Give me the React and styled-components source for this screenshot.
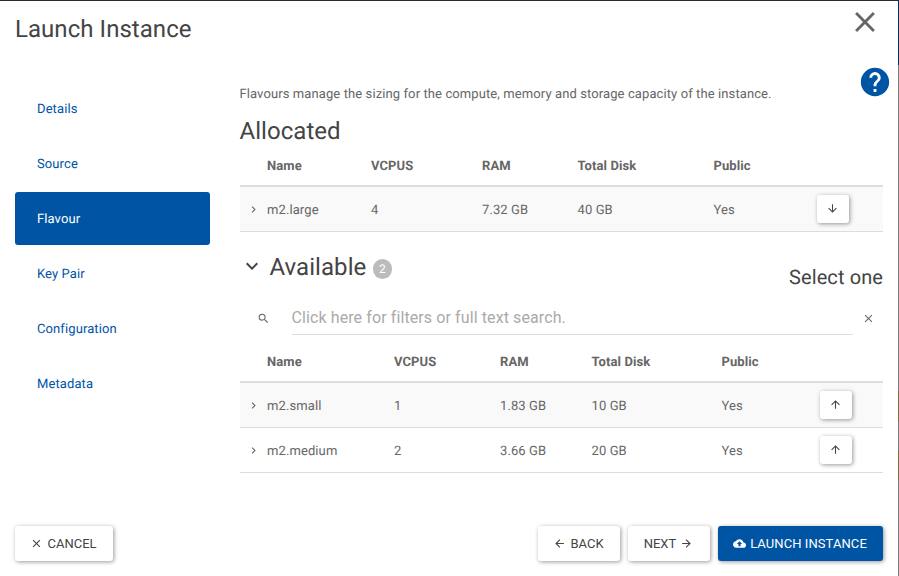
import React from "react";
import styled, { createGlobalStyle } from "styled-components";

const GlobalStyle = createGlobalStyle`
  *, *::before, *::after { box-sizing: border-box; }
  body {
    margin: 0;
    background: #fff;
    color: #666;
    font: 13px/20px Roboto, sans-serif;
    letter-spacing: 0.1px;
    overflow: hidden;
    -webkit-font-smoothing: antialiased;
    text-rendering: geometricPrecision;
  }
  h1, h2, h3, p { margin: 0; font-weight: 400; }
  button { font: inherit; letter-spacing: inherit; cursor: pointer; }
`;

const PATHS = {
  close:
    "M19,6.41L17.59,5L12,10.59L6.41,5L5,6.41L10.59,12L5,17.59L6.41,19L12,13.41L17.59,19L19,17.59L13.41,12L19,6.41Z",
  help:
    "M15.07,11.25L14.17,12.17C13.45,12.89 13,13.5 13,15H11V14.5C11,13.39 11.45,12.39 12.17,11.67L13.41,10.41C13.78,10.05 14,9.55 14,9C14,7.89 13.1,7 12,7A2,2 0 0,0 10,9H8A4,4 0 0,1 12,5A4,4 0 0,1 16,9C16,9.88 15.64,10.67 15.07,11.25M13,19H11V17H13M12,2A10,10 0 0,0 2,12A10,10 0 0,0 12,22A10,10 0 0,0 22,12C22,6.47 17.5,2 12,2Z",
  right: "M8.59,16.58L13.17,12L8.59,7.41L10,6L16,12L10,18L8.59,16.58Z",
  down: "M7.41,8.58L12,13.17L16.59,8.58L18,10L12,16L6,10L7.41,8.58Z",
  search:
    "M9.5,3A6.5,6.5 0 0,1 16,9.5C16,11.11 15.41,12.59 14.44,13.73L14.71,14H15.5L20.5,19L19,20.5L14,15.5V14.71L13.73,14.44C12.59,15.41 11.11,16 9.5,16A6.5,6.5 0 0,1 3,9.5A6.5,6.5 0 0,1 9.5,3M9.5,5C7,5 5,7 5,9.5C5,12 7,14 9.5,14C12,14 14,12 14,9.5C14,7 12,5 9.5,5Z",
  arrowDown:
    "M11,4H13V16L18.5,10.5L19.92,11.92L12,19.84L4.08,11.92L5.5,10.5L11,16V4Z",
  arrowUp:
    "M13,20H11V8L5.5,13.5L4.08,12.08L12,4.16L19.92,12.08L18.5,13.5L13,8V20Z",
  arrowLeft:
    "M20,11V13H8L13.5,18.5L12.08,19.92L4.16,12L12.08,4.08L13.5,5.5L8,11H20Z",
  arrowRight:
    "M4,11V13H16L10.5,18.5L11.92,19.92L19.84,12L11.92,4.08L10.5,5.5L16,11H4Z",
  upload:
    "M19.35 10.04C18.67 6.59 15.64 4 12 4 9.11 4 6.6 5.64 5.35 8.04 2.34 8.36 0 10.91 0 14c0 3.31 2.69 6 6 6h13c2.76 0 5-2.24 5-5 0-2.64-2.05-4.78-4.65-4.96zM14 13v4h-4v-4H7l5-5 5 5h-3z",
};

const Svg = styled.svg`
  display: block;
  flex: none;
  width: ${(p) => p.$size}px;
  height: ${(p) => p.$size}px;
  fill: currentColor;
`;
const Icon = ({ name, size = 13 }) => (
  <Svg viewBox="0 0 24 24" $size={size} aria-hidden="true">
    <path d={PATHS[name]} />
  </Svg>
);

const Screen = styled.div`
  display: grid;
  grid-template-columns: 898px 1px;
  width: 899px;
  height: 576px;
`;
const Backdrop = styled.div`
  background: linear-gradient(#002c57 65px, #7b7b7b 65px 391px, #7d6848 391px 422px, #7b7b7b 422px 450px, #7d6848 450px 480px, #7b7b7b 480px);
`;
const Modal = styled.main`
  display: grid;
  grid-template-columns: 195px 1fr;
  grid-template-rows: 66px 1fr 50px;
  column-gap: 30px;
  padding: 0 15px 0 15px;
  border-top: 1px solid #2b2a2c;
`;
const Header = styled.header`
  grid-column: 1 / -1;
  display: flex;
  justify-content: space-between;
  padding-top: 4px;
`;
const Title = styled.h1`
  color: #444;
  font-size: 24px;
  line-height: 28px;
  letter-spacing: 0.05px;
`;
const HeaderTitle = styled(Title)`
  padding-top: 10px;
`;
const AllocatedTitle = styled(Title)`
  margin-left: -0.5px;
`;
const PlainButton = styled.button`
  display: flex;
  align-items: center;
  justify-content: center;
  align-self: flex-start;
  padding: 0;
  border: 0;
  background: none;
  color: ${(p) => p.$color ?? "#666"};
`;
const CloseButton = styled(PlainButton)`
  margin-right: 1px;
`;
const Nav = styled.nav`
  display: flex;
  flex-direction: column;
  gap: 2px;
  padding-top: 15px;
`;
const Step = styled.a`
  display: flex;
  align-items: center;
  height: 53px;
  padding: 2px 22px 0;
  border-radius: 3px;
  color: ${(p) => (p.$active ? "#fff" : "#0054a6")};
  background: ${(p) => (p.$active ? "#0054a4" : "transparent")};
`;
const Content = styled.section`
  display: flex;
  flex-direction: column;
  min-width: 0;
`;
const Intro = styled.div`
  display: flex;
  justify-content: space-between;
  height: 52px;
  margin-top: -2px;
  margin-right: -9px;
`;
const IntroText = styled.p`
  margin-left: -0.5px;
  padding-top: 20px;
`;
const SectionHead = styled.div`
  display: flex;
  align-items: center;
  height: 28px;
`;
const Available = styled(SectionHead)`
  height: 50px;
  margin-top: 16px;
  align-items: flex-start;
`;
const Toggle = styled(PlainButton)`
  width: 24px;
  height: 28px;
  margin-top: 4px;
  margin-right: 6px;
  margin-left: -0.5px;
  color: #444;
`;
const AvailableTitle = styled(Title)`
  margin-top: 5px;
`;
const Badge = styled.span`
  width: 19px;
  height: 20px;
  margin: 11px 0 0 6.5px;
  border-radius: 10px;
  background: #bbb;
  color: #fff;
  font-size: 12px;
  line-height: 20px;
  letter-spacing: 0;
  text-align: center;
`;
const Hint = styled.h3`
  margin: 15px 0 0 auto;
  color: #444;
  font-size: 20px;
  line-height: 28px;
  letter-spacing: 0.1px;
`;
const Search = styled.div`
  display: grid;
  grid-template-columns: 52px 561px 30px;
  height: 37px;
  margin-top: 1px;
`;
const SearchIcon = styled.span`
  display: flex;
  justify-content: center;
  padding: 13px 6px 0 0;
`;
const SearchInput = styled.input`
  width: 100%;
  height: 36px;
  padding: 2px 0 0;
  border: 0;
  border-bottom: 1px solid #ddd;
  outline: 0;
  background: none;
  color: #444;
  font: 16px/24px Roboto, sans-serif;
  letter-spacing: 0.1px;
  text-indent: -0.5px;
  &::placeholder { color: #aaa; opacity: 1; }
`;
const Clear = styled(PlainButton)`
  padding: 13px 0 0 1px;
`;
const Table = styled.div`
  display: flex;
  flex-direction: column;
  flex: none;
`;
const Row = styled.div`
  display: grid;
  grid-template-columns: 27px ${(p) => p.$cols} 1fr;
  align-items: center;
  height: 45px;
  border-bottom: 1px solid #ddd;
  background: ${(p) => (p.$shaded ? "#f9f9f9" : "#fff")};
`;
const HeadRow = styled(Row)`
  height: ${(p) => p.$height}px;
  padding-bottom: ${(p) => p.$pad}px;
  align-items: end;
  border-bottom-width: 2px;
  font-weight: 700;
`;
const Cell = styled.span`
  padding-top: 3px;
`;
const Expander = styled(PlainButton)`
  align-self: center;
  width: 27px;
`;
const MoveButton = styled.button`
  display: flex;
  align-items: center;
  justify-content: center;
  width: 32px;
  height: 28px;
  padding: 0 1px 1px 0;
  border: 0;
  border-radius: 3px;
  background: #fff;
  color: #444;
  box-shadow: 1px 1px 4px rgba(0, 0, 0, 0.4);
`;
const Footer = styled.footer`
  grid-column: 1 / -1;
  display: flex;
  gap: 8px;
  height: 35px;
`;
const Button = styled.button`
  display: flex;
  align-items: center;
  justify-content: center;
  gap: 4px;
  width: ${(p) => p.$width}px;
  height: 35px;
  padding: 0 1px 0 0;
  border: 0;
  border-radius: 3px;
  background: ${(p) => (p.$primary ? "#0054a4" : "#fff")};
  color: ${(p) => (p.$primary ? "#fff" : "#444")};
  letter-spacing: ${(p) => (p.$primary ? 0.08 : 0)}px;
  box-shadow: 1px 1px 4px rgba(0, 0, 0, 0.4);
`;
const Actions = styled.div`
  display: flex;
  gap: 8px;
  margin-left: auto;
`;

const STEPS = ["Details", "Source", "Flavour", "Key Pair", "Configuration", "Metadata"];
const HEADS = ["Name", "VCPUS", "RAM", "Total Disk", "Public"];
const ALLOCATED = [["m2.large", "4", "7.32 GB", "40 GB", "Yes"]];
const AVAILABLE = [
  ["m2.small", "1", "1.83 GB", "10 GB", "Yes"],
  ["m2.medium", "2", "3.66 GB", "20 GB", "Yes"],
];

function FlavourTable({ rows, cols, icon, headHeight, headPad }) {
  return (
    <Table role="table">
      <HeadRow $cols={cols} $height={headHeight} $pad={headPad} role="row">
        <span />
        {HEADS.map((h) => <span key={h}>{h}</span>)}
      </HeadRow>
      {rows.map((cells, i) => (
        <Row key={cells[0]} $cols={cols} $shaded={i % 2 === 0} role="row">
          <Expander aria-label="Expand"><Icon name="right" /></Expander>
          {cells.map((c, j) => <Cell key={j}>{c}</Cell>)}
          <MoveButton aria-label="Move"><Icon name={icon} /></MoveButton>
        </Row>
      ))}
    </Table>
  );
}

export default function App() {
  return (
    <>
      <GlobalStyle />
      <Screen>
        <Modal>
          <Header>
            <HeaderTitle>Launch Instance</HeaderTitle>
            <CloseButton aria-label="Close"><Icon name="close" size={34} /></CloseButton>
          </Header>
          <Nav>
            {STEPS.map((s) => <Step key={s} $active={s === "Flavour"}>{s}</Step>)}
          </Nav>
          <Content>
            <Intro>
              <IntroText>
                Flavours manage the sizing for the compute, memory and storage capacity of the instance.
              </IntroText>
              <PlainButton $color="#0054a4" aria-label="Help"><Icon name="help" size={34} /></PlainButton>
            </Intro>
            <SectionHead><AllocatedTitle as="h2">Allocated</AllocatedTitle></SectionHead>
            <FlavourTable
              rows={ALLOCATED}
              cols="104px 111px 95.5px 136px 103.5px"
              icon="arrowDown"
              headHeight={42}
              headPad={8}
            />
            <Available>
              <Toggle aria-label="Collapse"><Icon name="down" size={24} /></Toggle>
              <AvailableTitle as="h2">Available</AvailableTitle>
              <Badge>2</Badge>
              <Hint>Select one</Hint>
            </Available>
            <Search>
              <SearchIcon><Icon name="search" /></SearchIcon>
              <SearchInput placeholder="Click here for filters or full text search." />
              <Clear aria-label="Clear"><Icon name="close" /></Clear>
            </Search>
            <FlavourTable
              rows={AVAILABLE}
              cols="127px 106px 91.5px 130px 98.5px"
              icon="arrowUp"
              headHeight={47}
              headPad={8}
            />
          </Content>
          <Footer>
            <Button $width={98}><Icon name="close" />CANCEL</Button>
            <Actions>
              <Button $width={82}><Icon name="arrowLeft" />BACK</Button>
              <Button $width={82}>NEXT<Icon name="arrowRight" /></Button>
              <Button $width={165} $primary><Icon name="upload" />LAUNCH INSTANCE</Button>
            </Actions>
          </Footer>
        </Modal>
        <Backdrop />
      </Screen>
    </>
  );
}
